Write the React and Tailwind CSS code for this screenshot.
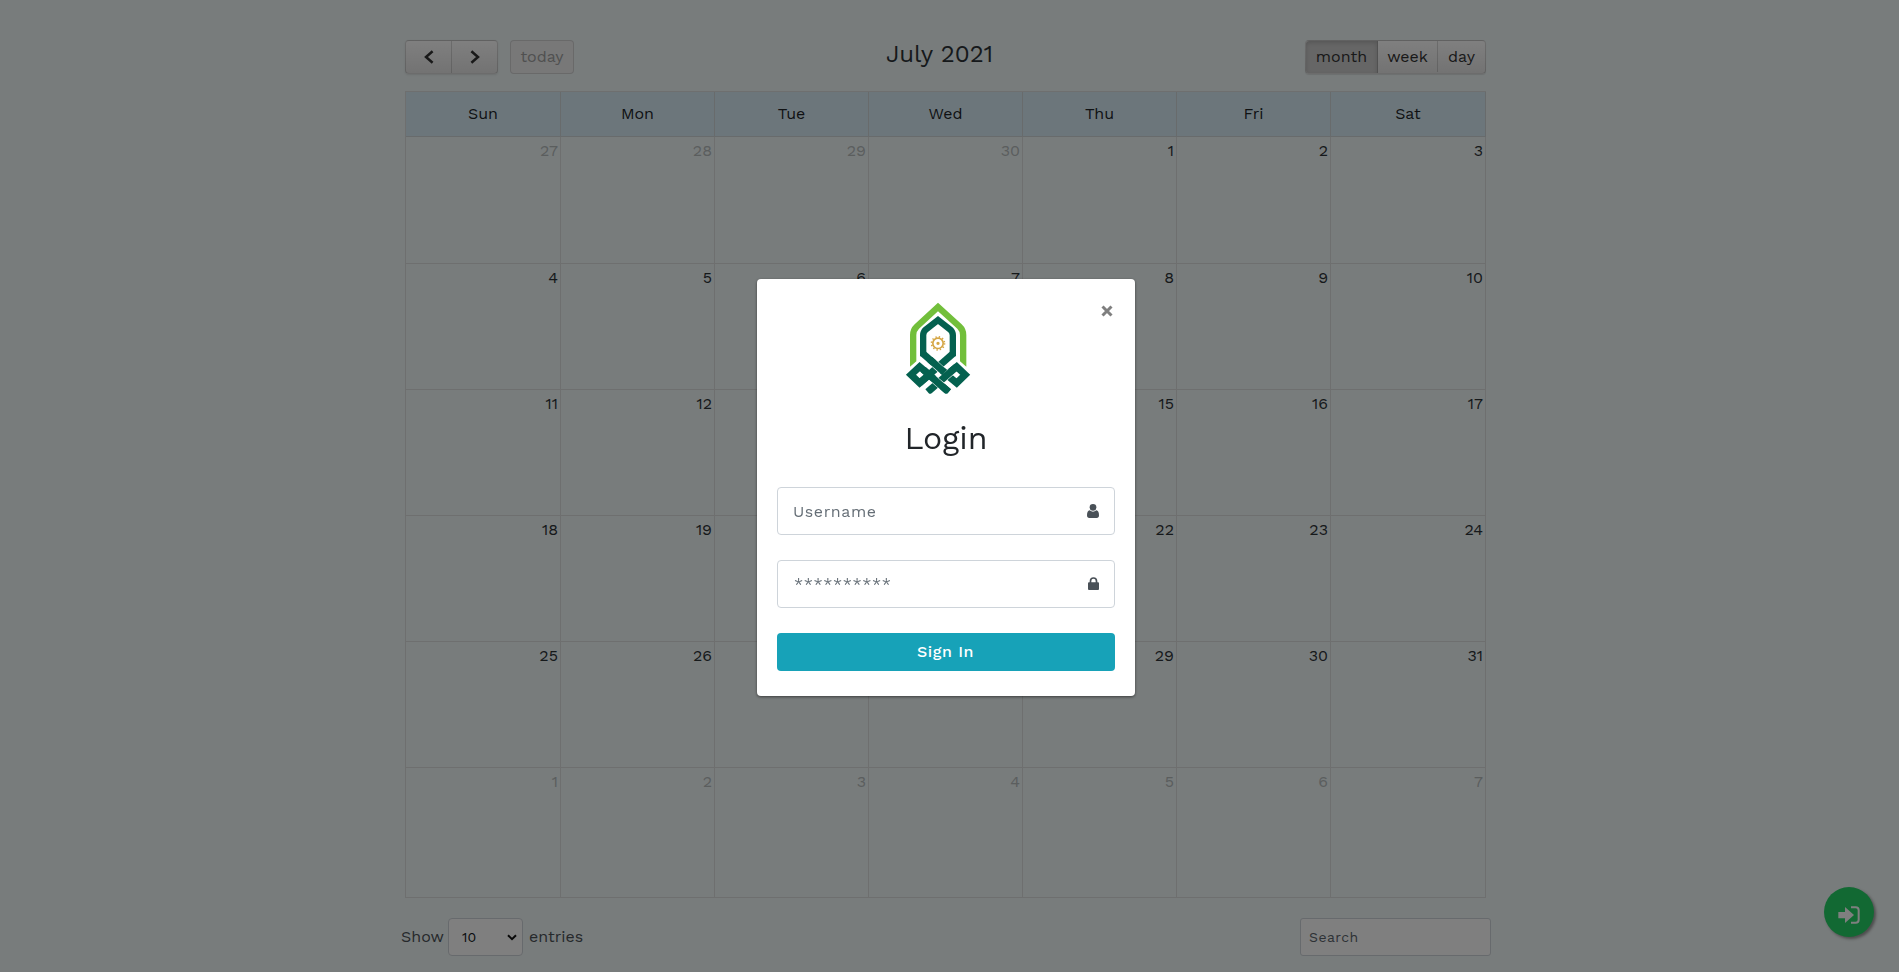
const weekdays = ["Sun", "Mon", "Tue", "Wed", "Thu", "Fri", "Sat"];

const weeks = [
  [27, 28, 29, 30, 1, 2, 3],
  [4, 5, 6, 7, 8, 9, 10],
  [11, 12, 13, 14, 15, 16, 17],
  [18, 19, 20, 21, 22, 23, 24],
  [25, 26, 27, 28, 29, 30, 31],
  [1, 2, 3, 4, 5, 6, 7],
];

const isOtherMonth = (week, day) => (week === 0 && day > 20) || (week === 5 && day < 20);

function Chevron({ flip }) {
  return (
    <svg viewBox="0 0 10 14" className={flip ? "h-[14px] w-[10px] -scale-x-100" : "h-[14px] w-[10px]"}>
      <path d="M8.6 1.2 2 7l6.6 5.8" fill="none" stroke="#333" strokeWidth="2.5" />
    </svg>
  );
}

function Toolbar() {
  return (
    <div className="flex h-[34px] items-stretch justify-between text-[#333]">
      <div className="flex w-[294px]">
        <div className="flex w-[93px] rounded-[4px] border border-black/15 bg-linear-to-b from-white to-[#e6e6e6] shadow-[0_1px_2px_rgba(0,0,0,0.1)]">
          <button className="flex flex-1 items-center justify-center border-r border-black/15">
            <Chevron />
          </button>
          <button className="flex flex-1 items-center justify-center">
            <Chevron flip />
          </button>
        </div>
        <button className="ml-3 w-[64px] rounded-[4px] border border-black/12 bg-[#f0f0f1] pb-px text-base text-[#a0a0a0]">
          today
        </button>
      </div>
      <h2 className="-mt-[3px] text-2xl leading-[34px] text-[#2c3236]">July 2021</h2>
      <div className="flex w-[306px] justify-end">
        <div className="flex w-[181px] rounded-[4px] border border-black/15 bg-linear-to-b from-white to-[#e6e6e6] pb-px text-base shadow-[0_1px_1px_rgba(0,0,0,0.1)]">
          <button className="-mb-px w-[72px] rounded-l-[3px] border-r border-black/20 bg-[#ccc] pb-px shadow-[inset_0_2px_4px_rgba(0,0,0,0.15)]">
            month
          </button>
          <button className="w-[60px] border-r border-black/15">week</button>
          <button className="flex-1">day</button>
        </div>
      </div>
    </div>
  );
}

function Calendar() {
  return (
    <div className="mt-[17px] w-[1081px] border-t border-l border-[#dddfdf]">
      <div className="grid h-[45px] grid-cols-[155px_repeat(5,154px)_155px] bg-[#d9edf7]">
        {weekdays.map((d) => (
          <div
            key={d}
            className="flex items-center justify-center border-r border-b border-[#d0d6d8] text-base text-[#212529]"
          >
            {d}
          </div>
        ))}
      </div>
      <div className="grid grid-cols-[155px_repeat(5,154px)_155px] grid-rows-[127px_repeat(4,126px)_130px]">
        {weeks.flatMap((week, w) =>
          week.map((day) => (
            <div
              key={w + "-" + day}
              className={
                "border-r border-b border-[#dddfdf] pt-[4px] pr-[2px] text-right text-base leading-5 " +
                (isOtherMonth(w, day) ? "text-[#b6bcbd]" : "text-[#2c3236]")
              }
            >
              {day}
            </div>
          ))
        )}
      </div>
    </div>
  );
}

function TableControls() {
  return (
    <div className="mt-5 -ml-1 flex h-[38px] w-[1090px] items-center text-base text-[#4c5257]">
      <span className="w-[47px]">Show</span>
      <div className="flex h-[38px] w-[75px] items-center justify-between rounded-[4px] border border-[#ced4da] bg-white pr-[5px] pl-[13px] text-[14px] text-[#111518]">
        10
        <svg viewBox="0 0 10 7" className="h-[7px] w-[10px]">
          <path d="M1 1.2 5 5.2l4-4" fill="none" stroke="#111" strokeWidth="2" />
        </svg>
      </div>
      <span className="ml-[6px]">entries</span>
      <div className="ml-auto flex h-[38px] w-[191px] items-center rounded-[3px] border border-[#ced4da] bg-white pt-px pl-2 text-[14px] tracking-[0.45px] text-[#5c656d]">
        Search
      </div>
    </div>
  );
}

function LoginFab() {
  return (
    <button className="fixed right-[25px] bottom-[35px] flex h-[50px] w-[50px] items-center justify-center rounded-full bg-[#25d366] pt-[6px] shadow-[2px_2px_3px_#999]">
      <svg viewBox="0 0 66 54" className="h-[18px] w-[22px]">
        <path d="M1 18h20V3l27 24-27 24V37H1z" fill="#fff" />
        <path d="M39 4h14q9 0 9 9v28q0 9-9 9H39" fill="none" stroke="#fff" strokeWidth="6" />
      </svg>
    </button>
  );
}

function Logo() {
  return (
    <svg viewBox="459 90 210 290" className="h-[96.67px] w-[70px]">
      <path
        d="M480 290V195Q480 176 494 163L564 98l71 65Q649 176 649 195V290L630 274V195Q630 184 622 176L564 124l-57 52Q499 184 499 195V274Z"
        fill="#72bf3b"
      />
      <g fill="none" strokeWidth="21" stroke="#04614f">
        <path d="M538 314.500 509 290 483 314.500 509 339 538 314.500" />
        <path d="M590 314.500 620 290 645.500 314.500 620 339 590 314.500" />
        <path d="M519 251 598 320" />
        <path d="M520 299 596 366" />
        <path d="M548 304 580 276" stroke="#fff" strokeWidth="24" />
        <path d="M609 251 509 339" />
        <path d="M602 306 540 359" stroke="#fff" strokeWidth="24" />
        <path d="M620 290 533 366" />
        <path d="M551 279 577 302" stroke="#fff" strokeWidth="24" />
        <path d="M540 269 584 308" />
        <path d="M551 327 577 349" stroke="#fff" strokeWidth="24" />
        <path d="M543 320 596 366" />
        <path
          d="M519.500 259V196Q519.500 186 527 179L564 150 601 179Q608.500 186 608.500 196V259"
          strokeLinejoin="miter"
          strokeWidth="19"
        />
      </g>
      <path d="M500 371H630V395H500z" fill="#fff" />
      <g fill="none" stroke="#d5a645">
        <circle cx="564" cy="220" r="15.500" strokeWidth="5" />
        <circle cx="564" cy="220" r="19.500" strokeWidth="5" strokeDasharray="4 6.210" />
        <circle cx="564" cy="220" r="2.500" strokeWidth="5" />
      </g>
    </svg>
  );
}

function UserIcon() {
  return (
    <svg viewBox="0 0 36 42" className="h-[14px] w-[12px]" fill="#495057">
      <circle cx="18" cy="10" r="10" />
      <path d="M8 19q10 8 20 0 8 2 8 15 0 8-7 8H7q-7 0-7-8Q0 21 8 19z" />
    </svg>
  );
}

function LockIcon() {
  return (
    <svg viewBox="0 0 33 39" className="h-[13px] w-[11px]" fill="#495057">
      <rect y="16" width="33" height="23" rx="3" />
      <path d="M7.500 18V12q0-9 9-9t9 9v6" fill="none" stroke="#495057" strokeWidth="5" />
    </svg>
  );
}

function LoginModal() {
  return (
    <div className="fixed inset-0 flex items-start bg-black/50 pt-[279px] pl-[757px]">
      <div className="relative flex h-[417px] w-[378px] flex-col rounded-[4px] bg-white px-5 pt-[21px] shadow-[0_1px_3px_rgba(0,0,0,0.5)]">
        <button className="absolute top-[26px] right-[22px] h-[12px] w-[12px]" aria-label="Close">
          <svg viewBox="0 0 12 12" className="h-3 w-3">
            <path d="M1.500 1.500l9 9M10.500 1.500l-9 9" stroke="#7f7f7f" strokeWidth="3" />
          </svg>
        </button>
        <div className="ml-[126px] h-[96px]">
          <Logo />
        </div>
        <h1 className="mt-[20px] text-center text-[32px] leading-[44px] text-[#212529]">
          Login
        </h1>
        <div className="mt-[27px] flex h-[48px] shrink-0 items-center justify-between rounded-[4px] border border-[#ced4da] pr-[15px] pl-[15px] text-base tracking-[0.6px] text-[#656e76]">
          <span className="pt-px">Username</span>
          <UserIcon />
        </div>
        <div className="mt-[25px] flex h-[48px] shrink-0 items-center justify-between rounded-[4px] border border-[#ced4da] pr-[15px] pb-px pl-4 text-base tracking-[0.6px] text-[#656e76]">
          <span className="pt-px">**********</span>
          <LockIcon />
        </div>
        <button className="mt-[25px] h-[38px] shrink-0 rounded-[4px] bg-[#17a2b8] pr-px text-base font-medium tracking-[0.55px] text-white">
          Sign In
        </button>
      </div>
    </div>
  );
}

export default function App() {
  return (
    <div className="h-[972px] overflow-hidden bg-[#f0f8f8] pt-10 pl-[405px] font-['Work_Sans',Inter,sans-serif]">
      <div className="w-[1081px]">
        <Toolbar />
        <Calendar />
        <TableControls />
      </div>
      <LoginFab />
      <LoginModal />
    </div>
  );
}
